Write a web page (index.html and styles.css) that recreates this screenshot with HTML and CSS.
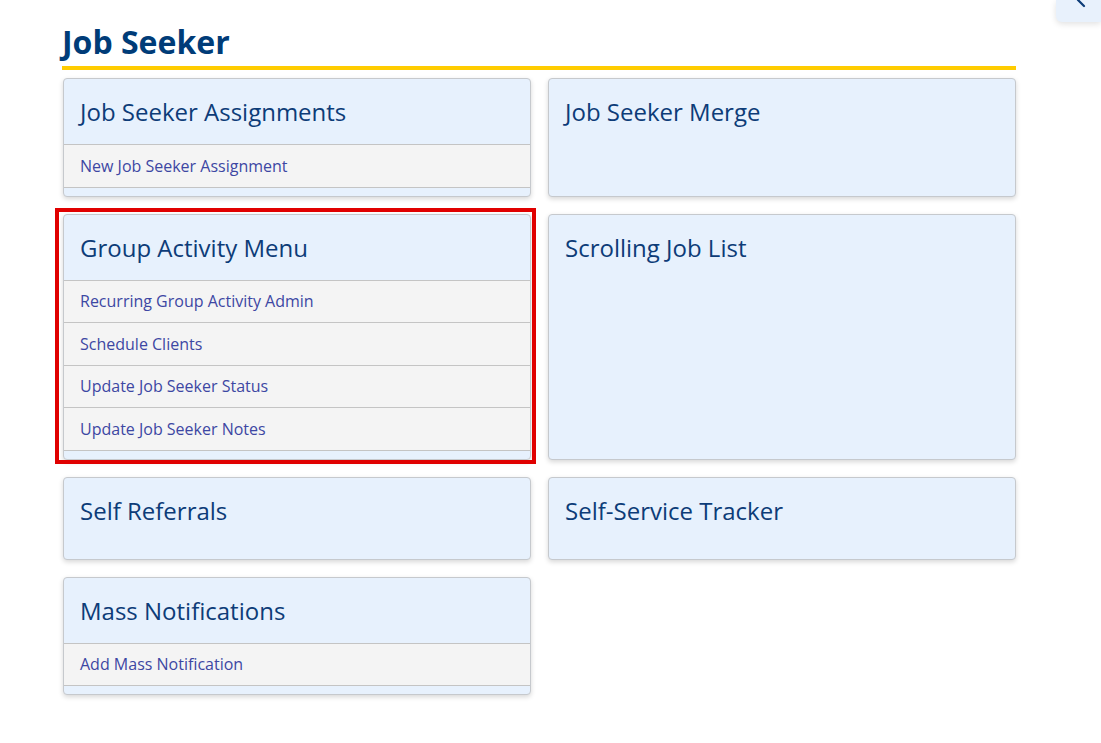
FILE: index.html
```html
<!DOCTYPE html>
<html lang="en">
<head>
<meta charset="utf-8">
<title>Job Seeker</title>
<link rel="stylesheet" href="styles.css">
</head>
<body>
<div class="side-tab">
  <svg class="side-tab__icon" width="20" height="20" viewBox="0 0 20 20"><polyline points="12,-6 6,0 12,6" fill="none" stroke="#0d3c78" stroke-width="2.2" stroke-linecap="round" stroke-linejoin="round"/></svg>
</div>
<main class="page">
  <h1 class="page__title">Job Seeker</h1>
  <div class="grid">
    <section class="card">
      <h2 class="card__title">Job Seeker Assignments</h2>
      <ul class="card__list">
        <li><a href="#">New Job Seeker Assignment</a></li>
      </ul>
    </section>
    <section class="card">
      <h2 class="card__title">Job Seeker Merge</h2>
    </section>
    <section class="card card--highlight">
      <h2 class="card__title">Group Activity Menu</h2>
      <ul class="card__list">
        <li><a href="#">Recurring Group Activity Admin</a></li>
        <li><a href="#">Schedule Clients</a></li>
        <li><a href="#">Update Job Seeker Status</a></li>
        <li><a href="#">Update Job Seeker Notes</a></li>
      </ul>
    </section>
    <section class="card">
      <h2 class="card__title">Scrolling Job List</h2>
    </section>
    <section class="card">
      <h2 class="card__title">Self Referrals</h2>
    </section>
    <section class="card">
      <h2 class="card__title">Self-Service Tracker</h2>
    </section>
    <section class="card">
      <h2 class="card__title">Mass Notifications</h2>
      <ul class="card__list">
        <li><a href="#">Add Mass Notification</a></li>
      </ul>
    </section>
  </div>
</main>
</body>
</html>
```
FILE: styles.css
```css
* { box-sizing: border-box; }
html, body { margin: 0; padding: 0; background: #fff; }
body { font-family: "Open Sans", "Noto Sans", sans-serif; }

.side-tab {
  position: absolute;
  top: 0;
  right: 0;
  width: 45px;
  height: 22px;
  background: #e8f1fc;
  border-bottom-left-radius: 6px;
  box-shadow: 0 2px 6px rgba(0,0,0,0.12);
}
.side-tab__icon { position: absolute; left: 16px; top: 0; overflow: visible; }

.page {
  width: 954px;
  margin-left: 62px;
  padding-top: 22px;
  padding-bottom: 40px;
}
.page__title {
  margin: 0 0 8px;
  font-size: 32px;
  line-height: 40px;
  font-weight: 700;
  color: #003c78;
  padding-bottom: 4px;
  border-bottom: 4px solid #ffcc00;
}

.grid {
  display: grid;
  grid-template-columns: 1fr 1fr;
  column-gap: 17px;
  row-gap: 17px;
  align-items: stretch;
  padding-left: 1px;
}

.card {
  position: relative;
  background: #e7f1fd;
  border: 1px solid #c6c9cd;
  border-radius: 4px;
  box-shadow: 0 2px 5px rgba(0,0,0,0.16);
  padding-bottom: 8px;
  min-height: 83px;
}
.card__title {
  margin: 0;
  padding: 16px 16px 16px;
  font-size: 24px;
  line-height: 33px;
  font-weight: 400;
  color: #0d3c78;
}
.card__list {
  list-style: none;
  margin: 0;
  padding: 0;
  border-top: 1px solid #c4c4c4;
}
.card__list li {
  background: #f4f4f4;
  border-bottom: 1px solid #c4c4c4;
  height: 42.5px;
  display: flex;
  align-items: center;
  padding: 0 16px;
}
.card__list a {
  font-size: 16px;
  color: #3d47a3;
  text-decoration: none;
}

.card--highlight::after {
  content: "";
  position: absolute;
  left: -9px;
  top: -7px;
  right: -6px;
  bottom: -5px;
  border: 4px solid #e00000;
  pointer-events: none;
}
```
